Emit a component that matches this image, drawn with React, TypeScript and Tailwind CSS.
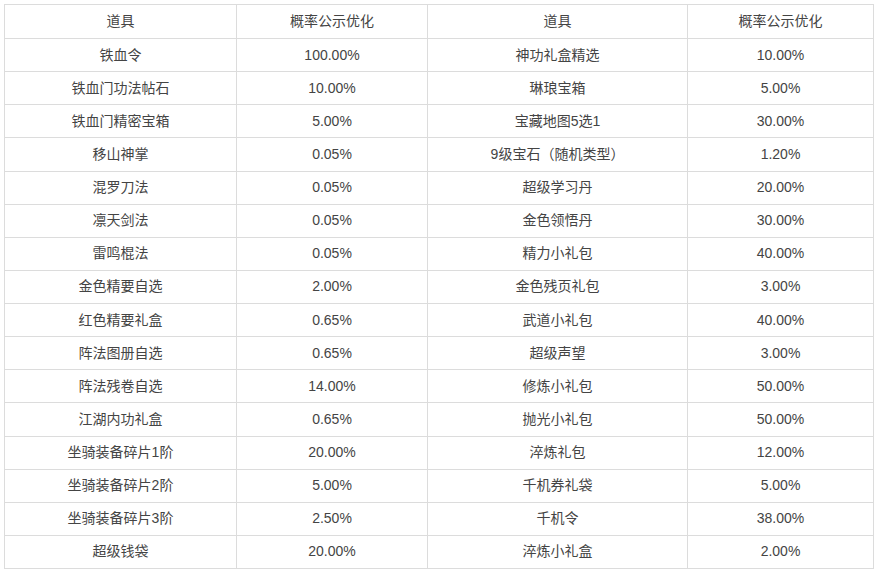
const rows: [string, string, string, string][] = [
  ["铁血令", "100.00%", "神功礼盒精选", "10.00%"],
  ["铁血门功法帖石", "10.00%", "琳琅宝箱", "5.00%"],
  ["铁血门精密宝箱", "5.00%", "宝藏地图5选1", "30.00%"],
  ["移山神掌", "0.05%", "9级宝石（随机类型）", "1.20%"],
  ["混罗刀法", "0.05%", "超级学习丹", "20.00%"],
  ["凛天剑法", "0.05%", "金色领悟丹", "30.00%"],
  ["雷鸣棍法", "0.05%", "精力小礼包", "40.00%"],
  ["金色精要自选", "2.00%", "金色残页礼包", "3.00%"],
  ["红色精要礼盒", "0.65%", "武道小礼包", "40.00%"],
  ["阵法图册自选", "0.65%", "超级声望", "3.00%"],
  ["阵法残卷自选", "14.00%", "修炼小礼包", "50.00%"],
  ["江湖内功礼盒", "0.65%", "抛光小礼包", "50.00%"],
  ["坐骑装备碎片1阶", "20.00%", "淬炼礼包", "12.00%"],
  ["坐骑装备碎片2阶", "5.00%", "千机券礼袋", "5.00%"],
  ["坐骑装备碎片3阶", "2.50%", "千机令", "38.00%"],
  ["超级钱袋", "20.00%", "淬炼小礼盒", "2.00%"],
];

const cell = "border border-[#dcdcdc] p-0 text-center align-middle";

export default function App() {
  return (
    <div className="min-h-screen bg-white p-1 font-['Liberation_Sans','Noto_Sans_CJK_SC',sans-serif] text-[14px] text-[#444]">
      <table className="w-[869px] table-fixed border-collapse">
        <colgroup>
          <col className="w-[232px]" />
          <col className="w-[191px]" />
          <col className="w-[260px]" />
          <col className="w-[186px]" />
        </colgroup>
        <thead>
          <tr className="h-[34px]">
            <th className={cell + " font-normal"}>道具</th>
            <th className={cell + " font-normal"}>概率公示优化</th>
            <th className={cell + " font-normal"}>道具</th>
            <th className={cell + " font-normal"}>概率公示优化</th>
          </tr>
        </thead>
        <tbody>
          {rows.map((r, i) => (
            <tr key={i} className="h-[33.125px]">
              {r.map((c, j) => (
                <td key={j} className={cell}>
                  {c}
                </td>
              ))}
            </tr>
          ))}
        </tbody>
      </table>
    </div>
  );
}
